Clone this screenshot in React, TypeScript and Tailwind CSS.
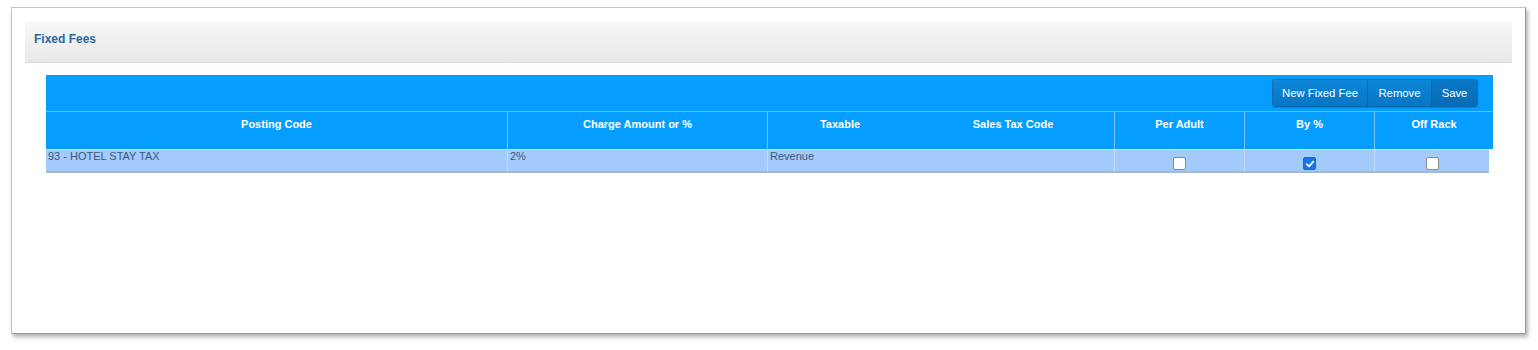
import React from "react";

const Check = ({ checked }: { checked?: boolean }) =>
  checked ? (
    <div className="w-[13px] h-[13px] rounded-[2px] bg-[#1a73e8] border border-[#1565d8] flex items-center justify-center">
      <svg width="10" height="10" viewBox="0 0 10 10">
        <path d="M1.8 5.2 L4 7.3 L8.3 2.6" fill="none" stroke="white" strokeWidth="1.8" strokeLinecap="round" strokeLinejoin="round" />
      </svg>
    </div>
  ) : (
    <div className="w-[13px] h-[13px] rounded-[2px] bg-white border border-[#8a8a8a]" />
  );

export default function App() {
  const font = { fontFamily: '"Liberation Sans", Arial, sans-serif' };
  return (
    <div className="w-[1538px] h-[350px] bg-white pt-[7px] pl-[11px]" style={font}>
      <div className="w-[1515px] h-[327px] bg-white border border-[#c4c4c4] border-r-[#9a9a9a] border-b-[#9a9a9a] shadow-[2px_3px_4px_rgba(0,0,0,0.3)] pt-[14px] px-[13px]">
        <div className="h-[41px] bg-gradient-to-b from-[#f7f7f7] to-[#e9e9e9] border-b border-[#dcdcdc] flex items-start pt-[10px] pl-[9px]">
          <span className="text-[12px] leading-[14px] font-bold text-[#2b67a0]">Fixed Fees</span>
        </div>
        <div className="mt-[12px] ml-[21px] w-[1447px]">
          <div className="h-[37px] bg-[#069efe] border-b border-[#5bbdfc] flex items-center justify-end pr-[15px]">
            <div className="flex h-[28px] rounded-[3px] border border-[#0568b0] overflow-hidden shadow-[0_1px_1px_rgba(0,0,0,0.15)]">
              <div className="w-[95px] flex items-center justify-center bg-gradient-to-b from-[#0d87d8] to-[#0775c4] text-white text-[11.3px] border-r border-[#0568b0]">New Fixed Fee</div>
              <div className="w-[64px] flex items-center justify-center bg-gradient-to-b from-[#0d87d8] to-[#0775c4] text-white text-[11.3px] border-r border-[#0568b0]">Remove</div>
              <div className="w-[45px] flex items-center justify-center bg-gradient-to-b from-[#0a78c6] to-[#066cb6] text-white text-[11.3px]">Save</div>
            </div>
          </div>
          <div className="h-[37px] bg-[#069efe] flex text-white text-[11px] leading-[13px] font-bold">
            <div className="w-[462px] text-center pt-[6px] border-r border-[#74c6fc]">Posting Code</div>
            <div className="w-[260px] text-center pt-[6px] border-r border-[#74c6fc]">Charge Amount or %</div>
            <div className="w-[144px] text-center pt-[6px]">Taxable</div>
            <div className="w-[203px] text-center pt-[6px] border-r border-[#74c6fc]">Sales Tax Code</div>
            <div className="w-[130px] text-center pt-[6px] border-r border-[#74c6fc]">Per Adult</div>
            <div className="w-[130px] text-center pt-[6px] border-r border-[#74c6fc]">By %</div>
            <div className="flex-1 text-center pt-[6px]">Off Rack</div>
          </div>
          <div className="w-[1443px] h-[24px] bg-[#a2cbfc] border-t border-[#c8e0fc] border-b-2 border-b-[#a9b9cc] flex text-[11px] leading-[13px] text-[#3a5680]">
            <div className="w-[462px] pl-[2px] border-r border-[#c5dbf7]">93 - HOTEL STAY TAX</div>
            <div className="w-[260px] pl-[2px] border-r border-[#c5dbf7]">2%</div>
            <div className="w-[347px] pl-[2px] border-r border-[#c5dbf7]">Revenue</div>
            <div className="w-[130px] flex justify-center items-end pb-[1px] border-r border-[#c5dbf7]"><Check /></div>
            <div className="w-[130px] flex justify-center items-end pb-[1px] border-r border-[#c5dbf7]"><Check checked /></div>
            <div className="flex-1 flex justify-center items-end pb-[1px]"><Check /></div>
          </div>
        </div>
      </div>
    </div>
  );
}
